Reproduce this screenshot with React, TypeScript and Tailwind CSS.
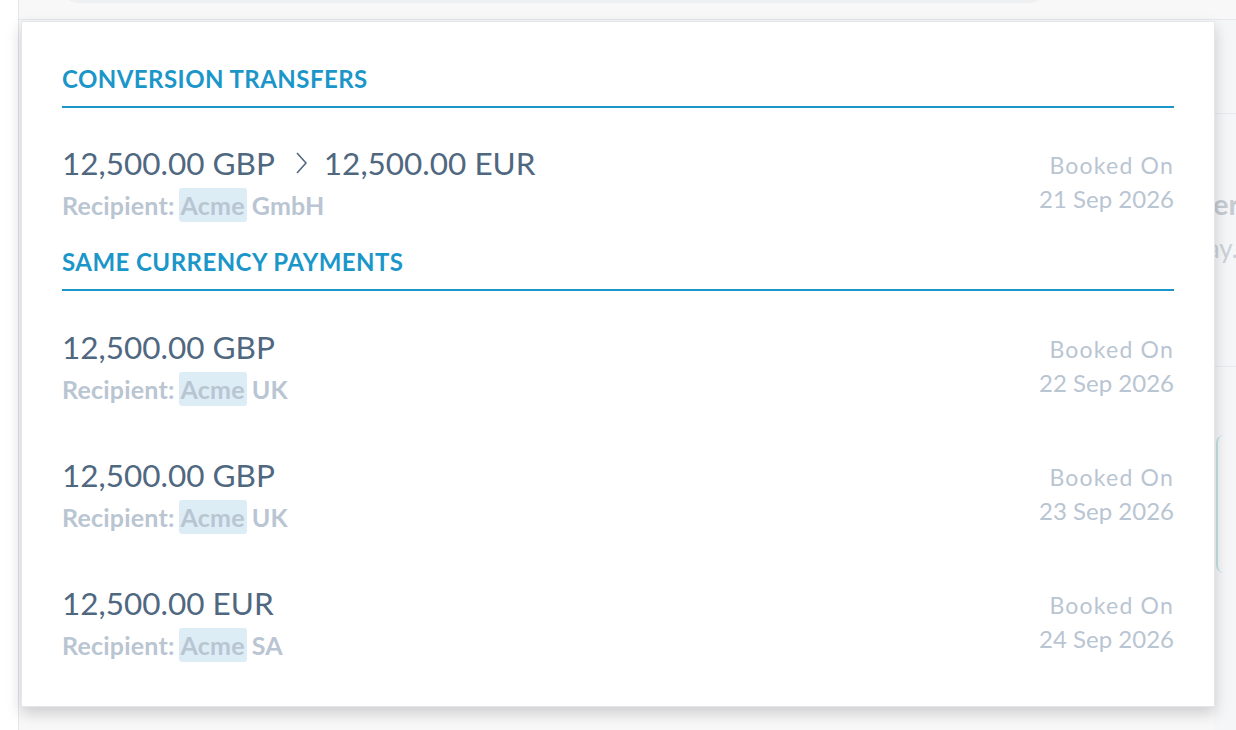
type Payment = {
  amount: string
  to?: string
  recipient: string
  date: string
}

const conversions: Payment[] = [
  { amount: '12,500.00 GBP', to: '12,500.00 EUR', recipient: 'GmbH', date: '21 Sep 2026' },
]

const sameCurrency: Payment[] = [
  { amount: '12,500.00 GBP', recipient: 'UK', date: '22 Sep 2026' },
  { amount: '12,500.00 GBP', recipient: 'UK', date: '23 Sep 2026' },
  { amount: '12,500.00 EUR', recipient: 'SA', date: '24 Sep 2026' },
]

function SectionHeader({ title }: { title: string }) {
  return (
    <div className="border-b-2 border-[#1b96c9] pb-[12px]">
      <h3 className="text-[24px] leading-[30px] font-bold tracking-[0.45px] text-[#1b96c9]">{title}</h3>
    </div>
  )
}

function PaymentRow({ p }: { p: Payment }) {
  return (
    <div className="flex items-start justify-between">
      <div className="flex flex-col">
        <div className="flex items-center text-[31.5px] leading-[40px] text-[#50687f]">
          <span>{p.amount}</span>
          {p.to && (
            <>
              <svg
                className="ml-[21px] mr-[17px] w-[11px] h-[22px]"
                viewBox="0 0 11 22"
                fill="none"
                stroke="#50687f"
                strokeWidth={1.6}
              >
                <polyline points="1,1 10,11 1,21" />
              </svg>
              <span>{p.to}</span>
            </>
          )}
        </div>
        <div className="flex items-center text-[25px] leading-[34px] font-bold tracking-[0.2px] text-[#b9c5d2] mt-[5px]">
          <span>Recipient:</span>
          <span className="ml-[4px] px-[2px] rounded-[3px] bg-[#dcedf5]">Acme</span>
          <span className="ml-[5px]">{p.recipient}</span>
        </div>
      </div>
      <div className="flex flex-col items-end text-[#b9c5d2] pt-[5px]">
        <span className="text-[23px] leading-[34px] tracking-[1.2px]">Booked On</span>
        <span className="text-[24px] leading-[34px]">{p.date}</span>
      </div>
    </div>
  )
}

export default function App() {
  return (
    <div
      className="relative w-[1236px] h-[730px] overflow-hidden bg-[#f8f8f9]"
      style={{ fontFamily: 'Lato, "Noto Sans", sans-serif' }}
    >
      {/* page behind the dropdown */}
      <div className="flex h-full">
        <div className="w-[19px] border-r border-[#e3e6ea] bg-white" />
        <div className="flex-1 flex flex-col">
          <div className="h-[20px] px-[40px] bg-[#f8f8f9] border-b border-[#e6e9ed]">
            <div className="-mt-[20px] h-[23px] w-[990px] rounded-b-[20px] bg-[#eef0f2]" />
          </div>
          <div className="flex-1 flex justify-end">
            <div className="w-[22px] flex flex-col bg-[#f5f6f7] overflow-hidden">
              <div className="h-[94px] shrink-0 border-b border-[#e8eaed]" />
              <div className="pt-[73px] -ml-[80px] whitespace-nowrap text-[29px] font-bold text-[#c6cbd1] leading-[34px]">
                Transfer
              </div>
              <div className="mt-[9px] -ml-[92px] whitespace-nowrap text-[26px] text-[#ccd1d7] leading-[36px]">
                Every day.
              </div>
              <div className="mt-[100px] shrink-0 border-b border-[#e8eaed]" />
              <div className="mt-[68px] h-[138px] shrink-0 ml-[2px] rounded-l-[8px] border-l-2 border-[#c5e0e6]" />
            </div>
          </div>
        </div>
      </div>

      {/* search results dropdown */}
      <div className="absolute left-[21px] top-[21px] w-[1194px] bg-white border border-[#e3e7ec] shadow-[0_6px_14px_rgba(0,0,0,0.18)] px-[40px] pt-[42px] pb-[44px]">
        <SectionHeader title="CONVERSION TRANSFERS" />
        <div className="pt-[35px] pb-[25px] flex flex-col">
          {conversions.map((p, i) => (
            <PaymentRow key={i} p={p} />
          ))}
        </div>
        <SectionHeader title="SAME CURRENCY PAYMENTS" />
        <div className="pt-[36px] flex flex-col gap-[49px]">
          {sameCurrency.map((p, i) => (
            <PaymentRow key={i} p={p} />
          ))}
        </div>
      </div>
    </div>
  )
}
